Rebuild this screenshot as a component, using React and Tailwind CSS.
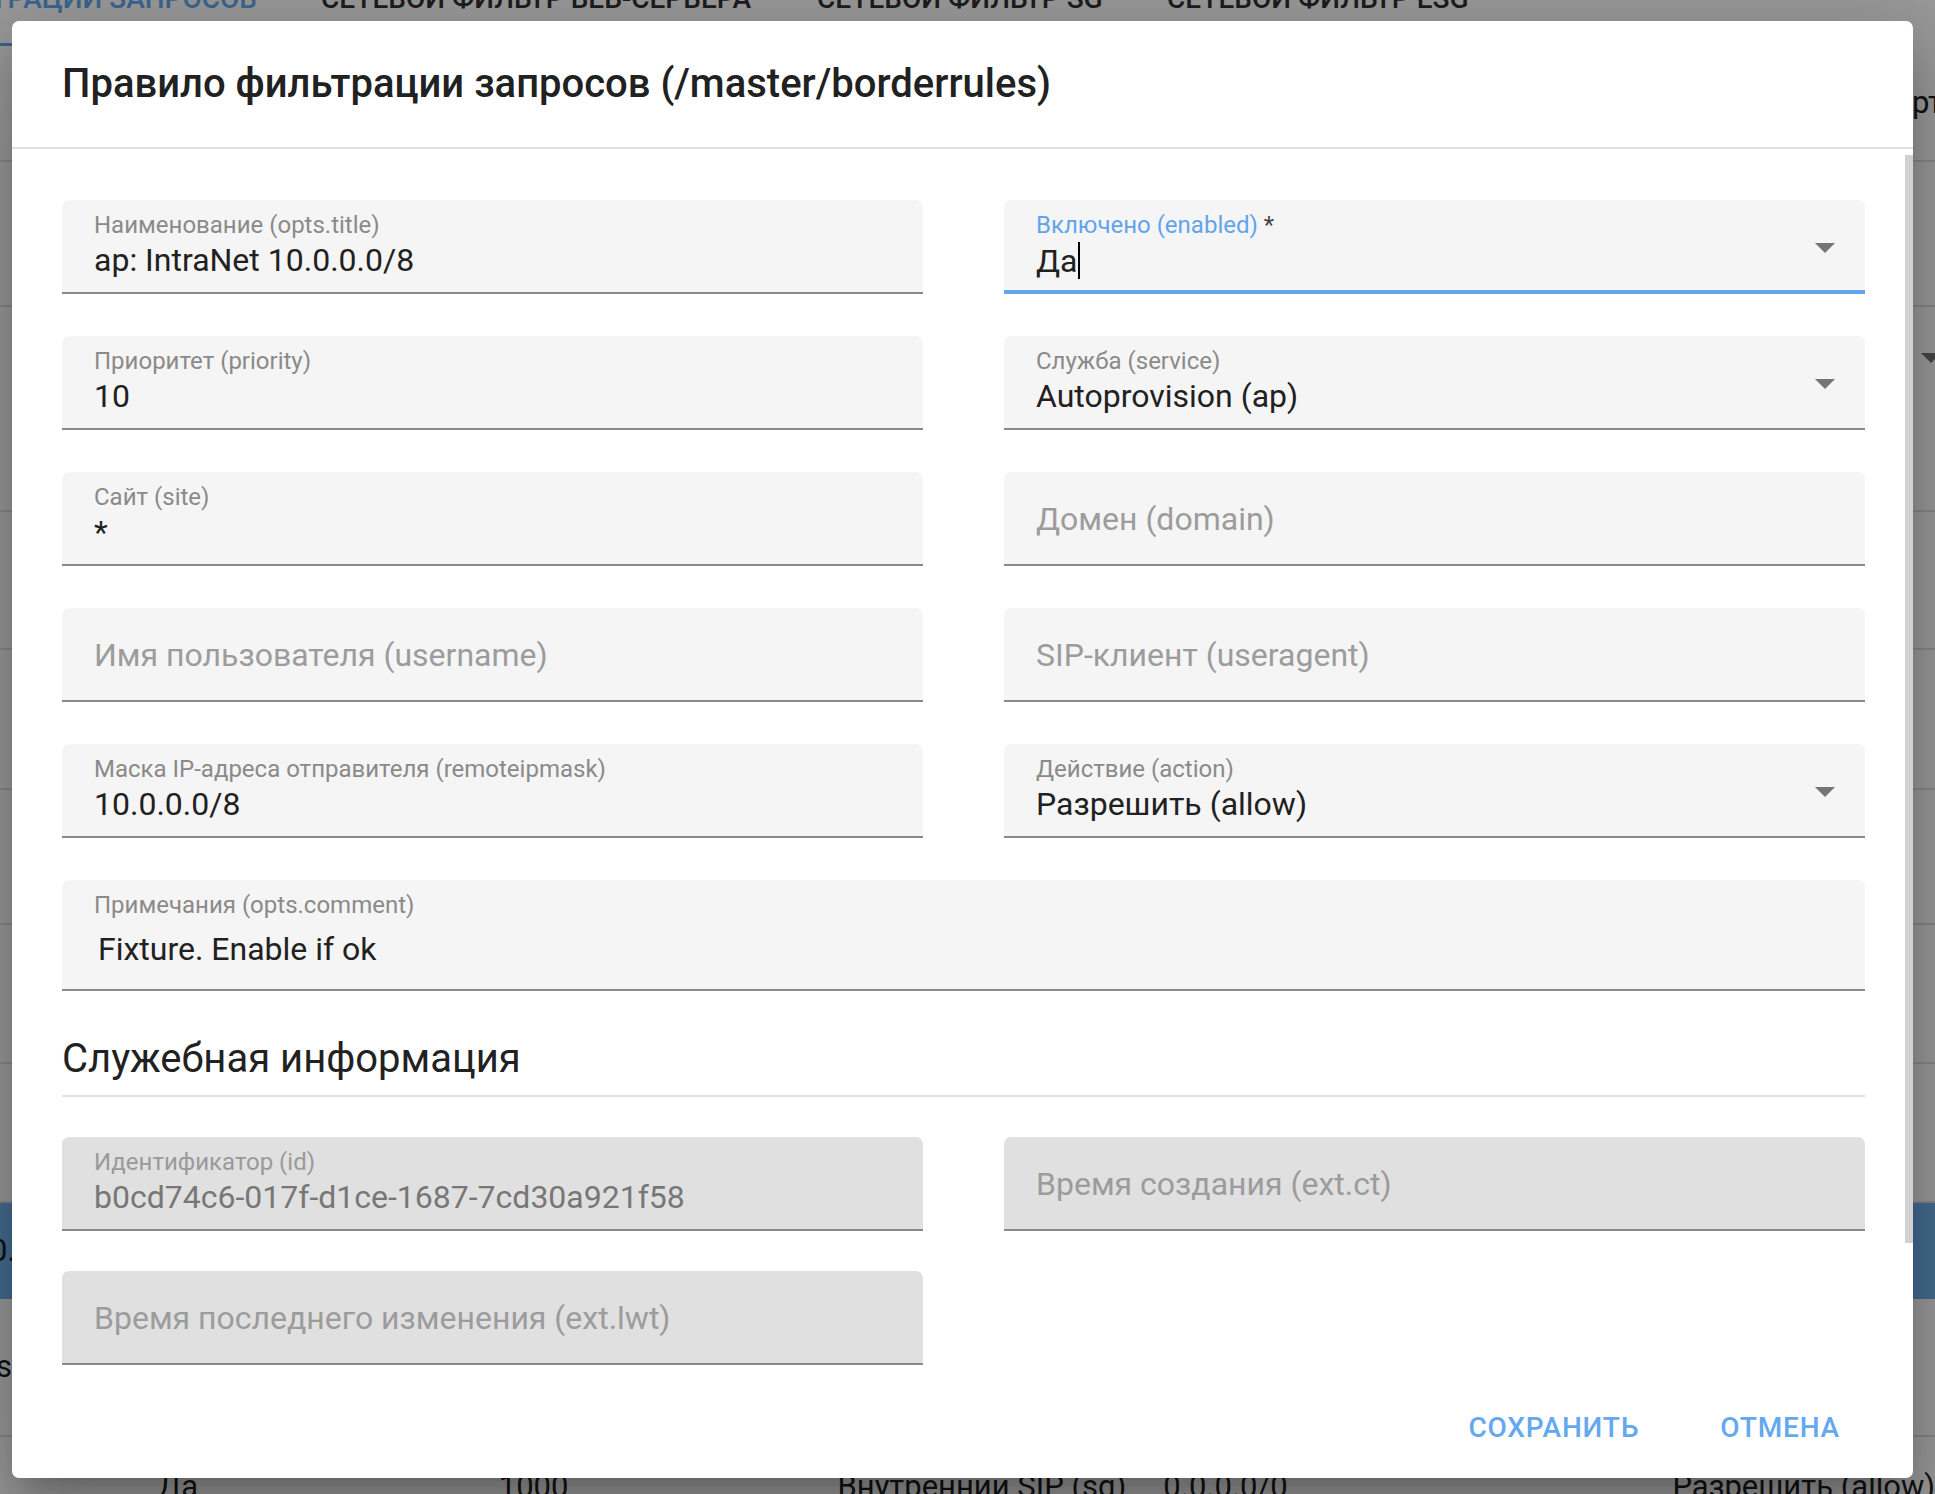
import React from "react";

// Arrow for select fields
const Caret = () => (
  <svg className="absolute right-[30px] top-[43px]" width="20" height="10" viewBox="0 0 20 10">
    <path d="M0 0h20L10 10z" fill="#757575" />
  </svg>
);

const Field = ({ label, value, required, focused, disabled, select, cursor, className = "" }) => {
  const bg = disabled ? "bg-[#e0e0e0]" : "bg-[#f5f5f5]";
  const line = focused ? "border-b-4 border-[#62a4ec]" : "border-b-2 border-[#8a8a8a]";
  const empty = value === undefined;

  return (
    <div className={`relative h-[94px] rounded-t-[7px] px-[32px] ${bg} ${line} ${className}`}>
      {empty ? (
        <div className="flex h-full items-center pt-[2px] text-[32px] text-[#9c9c9c]">{label}</div>
      ) : (
        <div className="pt-[11px]">
          <div className={`text-[24px] leading-[28px] ${focused ? "text-[#62a4ec]" : disabled ? "text-[#9a9a9a]" : "text-[#8a8a8a]"}`}>
            {label}
            {required && <span className="text-[#444]"> *</span>}
          </div>
          <div className={`mt-[3px] flex items-center text-[32px] leading-[36px] ${disabled ? "text-[#777]" : "text-[#212121]"}`}>
            {value}
            {cursor && <span className="ml-[1px] inline-block h-[37px] w-[2px] bg-black" />}
          </div>
        </div>
      )}
      {select && <Caret />}
    </div>
  );
};

const rowLines = [145, 205, 138, 140, 135, 139, 139];

const Page = () => (
  <div className="h-full w-full">
    {/* tabs */}
    <div className="relative flex h-[46px] flex-col">
      <div className="-mt-[18px] flex text-[28px] font-medium uppercase leading-[34px] whitespace-nowrap">
        <div className="flex w-[321px] justify-end overflow-hidden pr-[64px] text-[#64a8ef]">Фильтрации запросов</div>
        <div className="w-[496px] text-[#333]">Сетевой фильтр веб-сервера</div>
        <div className="w-[350px] text-[#333]">Сетевой фильтр SG</div>
        <div className="text-[#333]">Сетевой фильтр ESG</div>
      </div>
      <div className="absolute bottom-0 left-0 h-[3px] w-[290px] bg-[#64a8ef]" />
    </div>
    {/* toolbar */}
    <div className="flex h-[116px] justify-end overflow-hidden border-b-2 border-[#e0e0e0]">
      <div className="-mr-[8px] pt-[34px] text-[31px] text-[#212121]">Экспорт</div>
    </div>
    {/* table */}
    {rowLines.map((h, i) => (
      <div
        key={i}
        style={{ height: h }}
        className={`flex justify-end border-b-2 border-[#e0e0e0] ${i === 1 ? "items-start" : "items-center"}`}
      >
        {i === 1 && (
          <svg width="20" height="10" viewBox="0 0 20 10" className="-mr-[6px] mt-[46px]">
            <path d="M0 0h20L10 10z" fill="#757575" />
          </svg>
        )}
      </div>
    ))}
    <div className="flex h-[96px] items-center bg-[#72b4ee] text-[31px] text-[#212121]">
      <span className="-ml-[10px]">0.</span>
    </div>
    <div className="flex h-[138px] items-center border-b-2 border-[#e0e0e0] text-[31px] text-[#212121]">
      <span className="-ml-[4px]">s</span>
    </div>
    <div className="flex pt-[32px] text-[31px] leading-[36px] text-[#212121] whitespace-nowrap">
      <span className="ml-[158px] w-[342px]">Да</span>
      <span className="w-[340px]">1000</span>
      <span className="w-[327px]">Внутренний SIP (sg)</span>
      <span className="w-[511px]">0.0.0.0/0</span>
      <span>Разрешить (allow)</span>
    </div>
  </div>
);

export default function App() {
  return (
    <div className="relative h-[1494px] w-[1935px] overflow-hidden bg-white font-['Roboto',sans-serif]">
      <Page />
      <div className="absolute inset-0 bg-black/40" />

      {/* dialog */}
      <div className="absolute left-[12px] top-[21px] flex h-[1457px] w-[1901px] flex-col overflow-hidden rounded-[7px] bg-white shadow-[0_20px_28px_-13px_rgba(0,0,0,0.2),0_44px_70px_6px_rgba(0,0,0,0.14),0_17px_85px_15px_rgba(0,0,0,0.12)]">
        <div className="flex h-[128px] shrink-0 items-center border-b-2 border-[#e0e0e0] px-[50px]">
          <h2 className="text-[40px] font-medium text-[#212121]">Правило фильтрации запросов (/master/borderrules)</h2>
        </div>

        <div className="flex-1 pl-[50px] pr-[48px] pt-[51px]">
          <div className="grid grid-cols-2 gap-x-[81px] gap-y-[42px]">
            <Field label="Наименование (opts.title)" value="ap: IntraNet 10.0.0.0/8" />
            <Field label="Включено (enabled)" value="Да" required focused select cursor />
            <Field label="Приоритет (priority)" value="10" />
            <Field label="Служба (service)" value="Autoprovision (ap)" select />
            <Field label="Сайт (site)" value="*" />
            <Field label="Домен (domain)" />
            <Field label="Имя пользователя (username)" />
            <Field label="SIP-клиент (useragent)" />
            <Field label="Маска IP-адреса отправителя (remoteipmask)" value="10.0.0.0/8" />
            <Field label="Действие (action)" value="Разрешить (allow)" select />
          </div>

          <div className="mt-[42px] h-[111px] rounded-t-[7px] border-b-2 border-[#8a8a8a] bg-[#f5f5f5] px-[32px] pt-[11px]">
            <div className="text-[24px] leading-[28px] text-[#8a8a8a]">Примечания (opts.comment)</div>
            <div className="mt-[12px] pl-[4px] text-[32px] leading-[36px] text-[#212121]">Fixture. Enable if ok</div>
          </div>

          <div className="mt-[46px] border-b-2 border-[#e0e0e0] pb-[14px]">
            <h3 className="text-[40px] leading-[44px] text-[#212121]">Служебная информация</h3>
          </div>

          <div className="mt-[40px] grid grid-cols-2 gap-x-[81px] gap-y-[40px]">
            <Field label="Идентификатор (id)" value="b0cd74c6-017f-d1ce-1687-7cd30a921f58" disabled />
            <Field label="Время создания (ext.ct)" disabled />
            <Field label="Время последнего изменения (ext.lwt)" disabled />
          </div>
        </div>

        <div className="flex h-[100px] shrink-0 items-center justify-end gap-[51px] pr-[58px]">
          <button className="px-[15px] text-[28px] font-medium uppercase tracking-[0.03em] text-[#64a8ef]">Сохранить</button>
          <button className="px-[15px] text-[28px] font-medium uppercase tracking-[0.03em] text-[#64a8ef]">Отмена</button>
        </div>

        {/* scrollbar thumb */}
        <div className="absolute right-0 top-[134px] h-[1088px] w-[8px] bg-[#d1d1d1]" />
      </div>
    </div>
  );
}
